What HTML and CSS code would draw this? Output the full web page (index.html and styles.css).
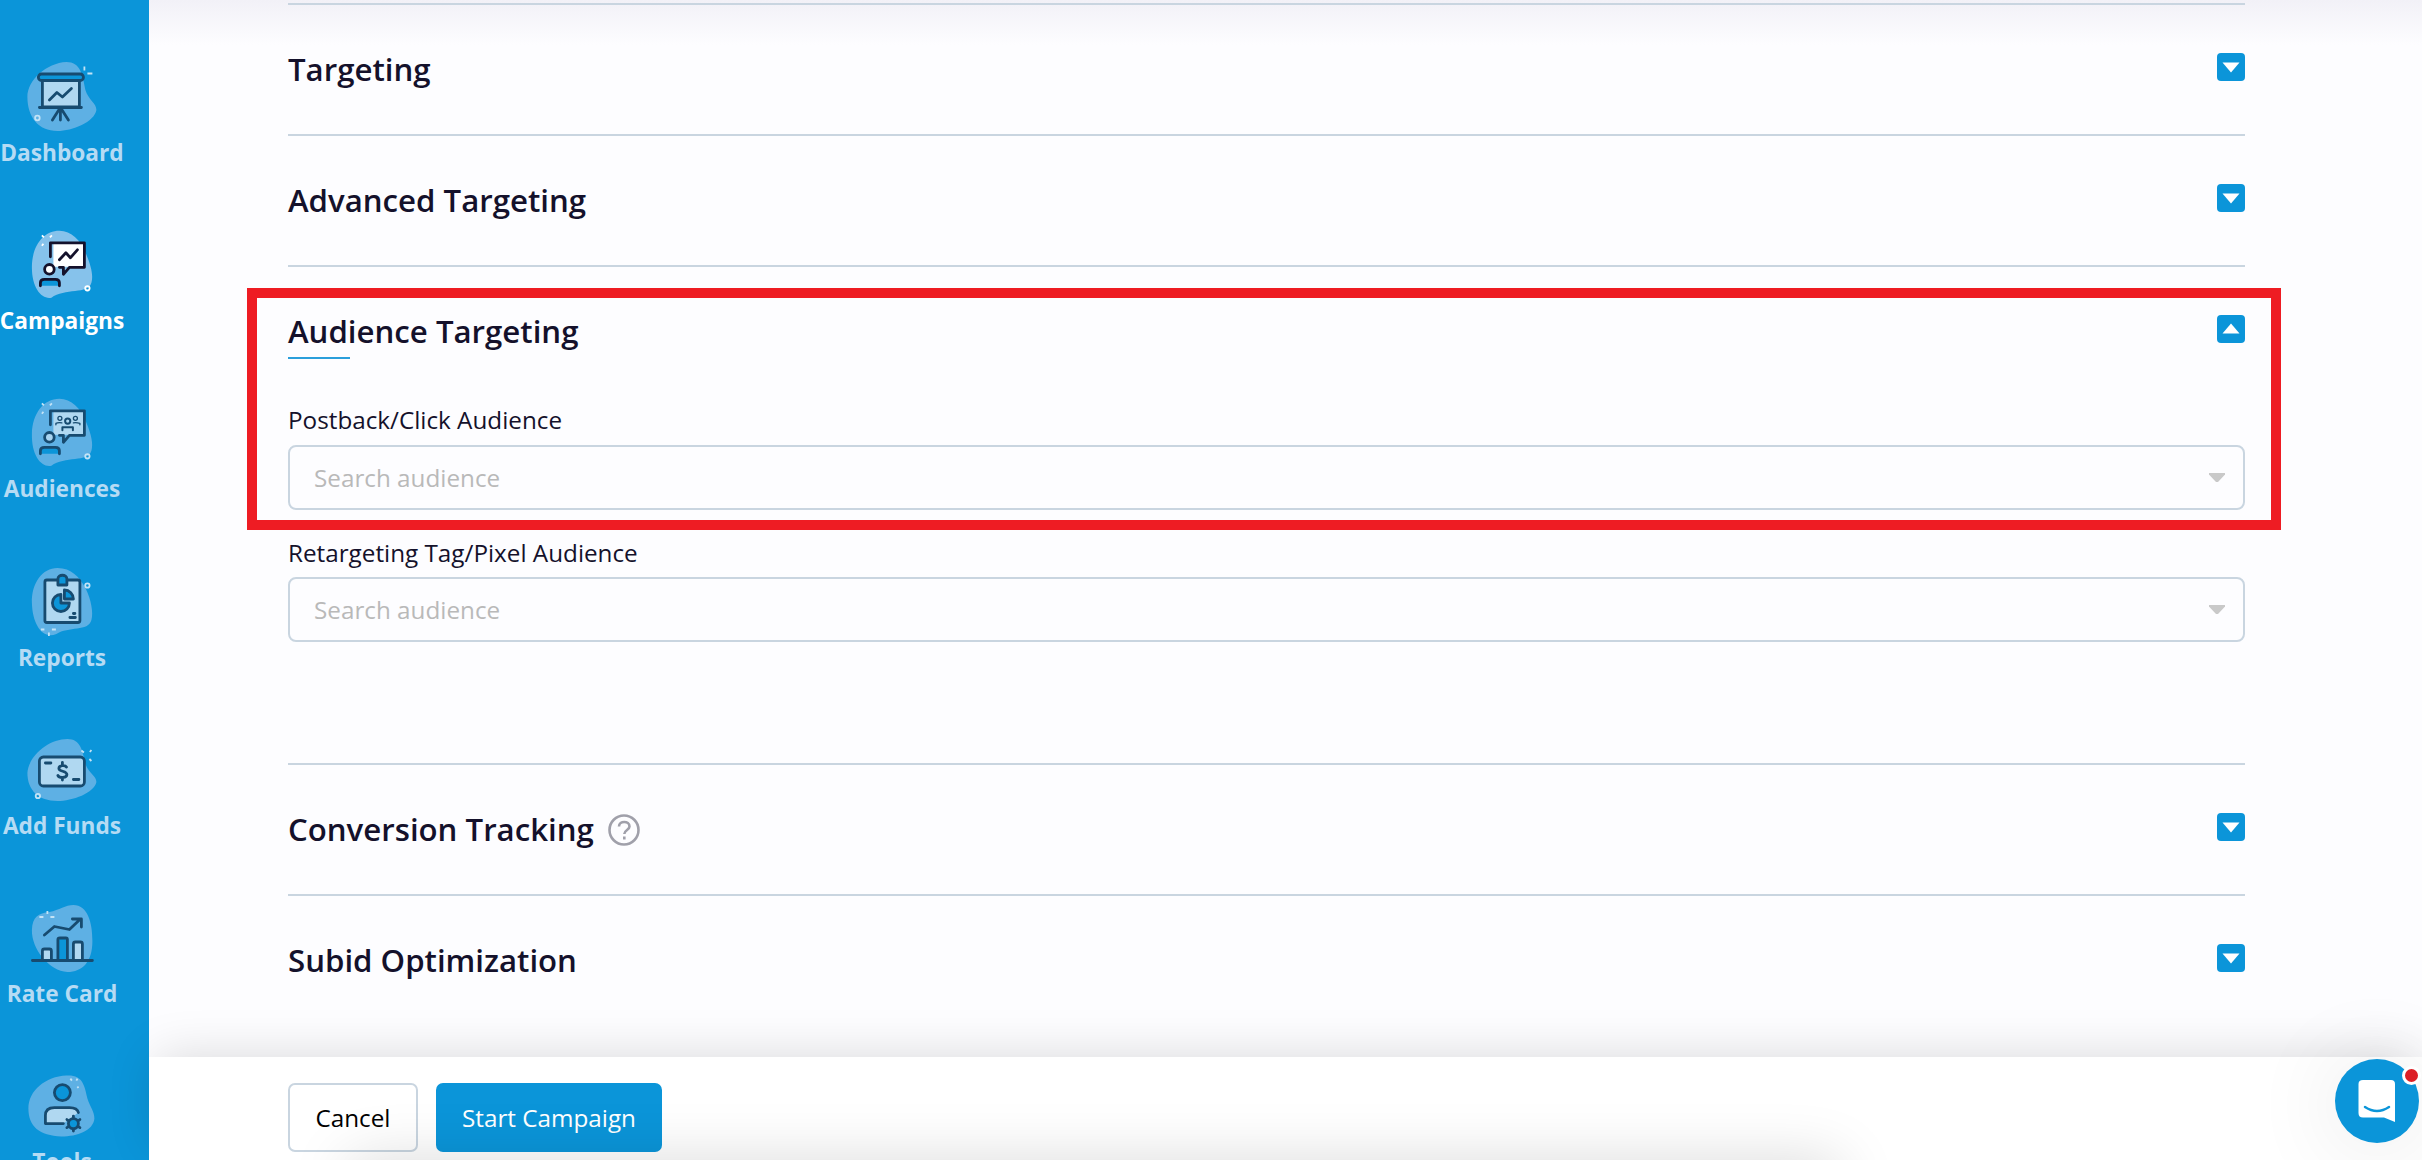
FILE: index.html
```html
<!DOCTYPE html>
<html lang="en">
<head>
<meta charset="utf-8">
<title>Create Campaign</title>
<link rel="stylesheet" href="styles.css">
</head>
<body>
<div class="app">
  <nav class="sidebar">
    <a class="nav-item">
      <svg class="nav-icon" viewBox="1.6 0 76 76">
        <path class="blob" d="M5 37C5 20 24 3 44 2C58 2 60 14 63 30C66 40 74 43 74 50C72 62 50 71 35 71C16 71 5 57 5 37Z"/>
        <g class="ink"><path class="paper" d="M20 20H57V47H20Z"/><rect class="blue" x="16" y="14" width="45" height="6.500" rx="3"/><path d="M17 47.500H59M38 48V60M37 49L30 60M39 49L46 60M27 40L34.500 32.500L40 37L49 28.500"/></g>
        <g class="spark"><circle cx="15" cy="58" r="2.300"/><path d="M62 6.500V10.500M65 13.500H70"/></g>
      </svg>
      <span class="nav-label">Dashboard</span>
    </a>
    <a class="nav-item active">
      <svg class="nav-icon" viewBox="1.6 -0.8 76 76">
        <path class="blob" d="M9.500 37C10 17 21 2 37 2C49 2 58 11 64 26C69 38 71 47 69 54C66 66 42 59 29 69C19 71 9 59 9.500 37Z"/>
        <g class="ink"><path class="paper" stroke="none" d="M31 15H61V38H31Z"/><path d="M28 28V14H62V38.500H47L41 45.500V38.500H37M37 31L43.500 24L48 29L55 21"/><circle class="light" cx="27" cy="40.500" r="4.800"/><path class="blue" d="M18 57V54Q18 50.500 22 50.500H33Q37 50.500 37 54V57"/></g>
        <g class="spark"><circle cx="65" cy="59.500" r="2.200"/><path d="M19.500 6.500L21.500 8.500M29.500 6.500L27.500 8.500M21 15L19.500 17"/></g>
      </svg>
      <span class="nav-label">Campaigns</span>
    </a>
    <a class="nav-item">
      <svg class="nav-icon" viewBox="1.6 -0.8 76 76">
        <path class="blob" d="M9.500 37C10 17 21 2 37 2C49 2 58 11 64 26C69 38 71 47 69 54C66 66 42 59 29 69C19 71 9 59 9.500 37Z"/>
        <g class="ink"><path class="paper" stroke="none" d="M31 15H61V38H31Z"/><path d="M28 28V14H62V38.500H47L41 45.500V38.500H37"/><circle class="light" cx="27" cy="40.500" r="4.800"/><path class="blue" d="M18 57V54Q18 50.500 22 50.500H33Q37 50.500 37 54V57"/><g class="thin"><circle cx="37.500" cy="21.500" r="2"/><circle cx="53" cy="21.500" r="2"/><circle class="bold" cx="45.300" cy="24.300" r="2.600"/><path d="M33.500 28V26.500Q35.500 25.500 39.500 26M57.500 28V26.500Q54 25.500 51 26"/><path class="bold" d="M40 33.500V30.500H50.500V33.500"/></g></g>
        <g class="spark"><circle cx="65" cy="59.500" r="2.200"/><path d="M19.500 6.500L21.500 8.500M29.500 6.500L27.500 8.500M21 15L19.500 17"/></g>
      </svg>
      <span class="nav-label">Audiences</span>
    </a>
    <a class="nav-item">
      <svg class="nav-icon" viewBox="1.6 -1 76 76">
        <path class="blob" d="M9.500 37C9 17 20 2 35 2C49 2 57 11 63 22C69 34 71 47 69 54C66 66 46 60 34 68C20 74 10 58 9.500 37Z"/>
        <g class="ink"><rect class="paper" x="22.500" y="14" width="35" height="42.500" rx="2"/><path class="blue" d="M35.500 19V13C35.500 8 44.500 8 44.500 13V19ZM38.500 28.500A8.500 8.500 0 1 0 47 37H38.500ZM42 24V33H51A9 9 0 0 0 42 24Z"/><path d="M51 47.500H52.500M47.500 51.500H53"/></g>
        <g class="spark"><circle cx="65" cy="19.500" r="2.200"/><path d="M18.500 63.500H22M29.500 63.500H33.500M26.500 66.500V70"/></g>
      </svg>
      <span class="nav-label">Reports</span>
    </a>
    <a class="nav-item">
      <svg class="nav-icon" viewBox="1.6 -1 76 76">
        <path class="blob" d="M5 39C6 22 26 5 45 5C58 5 60 16 63 30C67 40 74 42 74 48C72 59 50 67 35 67C16 67 5 56 5 39Z"/>
        <g class="ink"><rect class="paper" x="17" y="23" width="45" height="29" rx="4"/><path d="M23 29H28.500M51 45.500H56.500M44 33C43 31 36.500 31 36.500 34.500C36.500 38 44.500 36.500 44.500 40.500C44.500 44 37 44.500 35.500 41.500M40 28.500V31M40 43.500V46"/></g>
        <g class="spark"><circle cx="15.500" cy="62" r="2.200"/><path d="M59 16.500L61.500 18.500M69 16L67.500 18M67 25L69 27"/></g>
      </svg>
      <span class="nav-label">Add Funds</span>
    </a>
    <a class="nav-item">
      <svg class="nav-icon" viewBox="1.6 0 76 76">
        <path class="blob" d="M9.500 29C10 16 16 12 27 11C37 9 43 4 51 4C65 4 70 21 70 40C70 61 60 71 45 71C27 70 9 48 9.500 29Z"/>
        <g class="ink"><path class="paper" d="M20 58V50Q20 48 22 48H27Q29 48 29 50V58M51 58V43Q51 41 53 41H58Q60 41 60 43V58"/><path class="blue" d="M35.500 58V38.500Q35.500 37 37.500 37H43.500Q45 37 45 38.500V58"/><path d="M10 59.500H70M22 34L32 25.500L47 28.500L58 18M50 18H59V26"/></g>
        <g class="spark"><path d="M17 16H21M28 16H32M25 10V13"/></g>
      </svg>
      <span class="nav-label">Rate Card</span>
    </a>
    <a class="nav-item">
      <svg class="nav-icon" viewBox="0.6 -1.6 76 76">
        <path class="blob" d="M5 38C5 20 22 6 43 5C59 4 61 14 64 28C67 37 71 41 71 48C70 60 54 66 38 66C16 65 5 56 5 38Z"/>
        <g class="ink"><circle class="blue" cx="39" cy="22" r="8"/><path class="paper" d="M40 53H22V45Q22 37 31 37H46Q54 37 55 42"/><circle class="blue" cx="50" cy="53" r="5"/><path d="M50 45.500V47M50 59V60.500M43.500 49L45 50M55 56L56.500 57M43.500 57L45 56M55 50L56.500 49"/></g>
        <g class="spark"><path d="M47 8L48.500 10M54 8L53 10M54 16L55 17.500"/></g>
      </svg>
      <span class="nav-label">Tools</span>
    </a>
  </nav>
  <div class="page">
    <main class="content">
      <section class="section"><h2>Targeting</h2><button class="toggle"><svg viewBox="0 0 28 28"><path d="M5.500 9.500H22.500L14 19.500Z"/></svg></button></section>
      <section class="section"><h2>Advanced Targeting</h2><button class="toggle"><svg viewBox="0 0 28 28"><path d="M5.500 9.500H22.500L14 19.500Z"/></svg></button></section>
      <section class="section open">
        <header class="section-head"><h2>Audience Targeting</h2><button class="toggle"><svg viewBox="0 0 28 28"><path d="M5.500 18.500H22.500L14 8.500Z"/></svg></button></header>
        <label class="field-label">Postback/Click Audience</label>
        <div class="select"><span>Search audience</span><svg viewBox="0 0 16 10"><path d="M0 0H16V1.500L9 9H7L0 1.500Z"/></svg></div>
        <label class="field-label second">Retargeting Tag/Pixel Audience</label>
        <div class="select"><span>Search audience</span><svg viewBox="0 0 16 10"><path d="M0 0H16V1.500L9 9H7L0 1.500Z"/></svg></div>
        <div class="highlight"></div>
      </section>
      <section class="section"><h2>Conversion Tracking</h2><span class="help"><svg viewBox="0 0 32 32"><circle cx="16" cy="16" r="14.500"/><path d="M11 12.500C11 6.500 21.500 6.500 21.500 12.500C21.500 16 16.300 16 16.300 20"/><path d="M16.300 22.500V25.500"/></svg></span><button class="toggle"><svg viewBox="0 0 28 28"><path d="M5.500 9.500H22.500L14 19.500Z"/></svg></button></section>
      <section class="section"><h2>Subid Optimization</h2><button class="toggle"><svg viewBox="0 0 28 28"><path d="M5.500 9.500H22.500L14 19.500Z"/></svg></button></section>
    </main>
    <footer class="actions"><button class="btn">Cancel</button><button class="btn primary">Start Campaign</button></footer>
  </div>
  <button class="chat"><svg viewBox="0 0 84 84"><path class="bubble" d="M28 21H56Q60 21 60 25V63L49 58.500H28Q23.500 58.500 23.500 54V25Q23.500 21 28 21Z"/><path class="smile" d="M30 48Q42 56 54 48"/></svg><span class="badge"></span></button>
</div>
</body>
</html>
```
FILE: styles.css
```css
* { box-sizing: border-box; }
body { margin: 0; font-family: "Open Sans", sans-serif; color: #14112b; background: #fdfdff; overflow: hidden; }
button { font: inherit; border: 0; padding: 0; }
h2 { margin: -1px 0 0; font-size: 31.2px; font-weight: 600; line-height: 44px; white-space: nowrap; }
.app { position: relative; display: flex; height: 1160px; overflow: hidden; }

.sidebar { flex: 0 0 149px; padding-top: 60px; background: #0b95d9; }
.nav-item { display: flex; flex-direction: column; align-items: center; width: 124px; height: 168.2px; color: #b5dbf4; }
.nav-icon { flex: none; width: 76px; height: 76px; }
.nav-label { font-size: 22.7px; font-weight: 700; line-height: 33px; white-space: nowrap; }
.active { color: #fff; }
.blob { fill: #5eb0e4; }
.active .blob { fill: #86c2eb; }
.ink { fill: none; stroke: #174b70; stroke-width: 2.8; stroke-linecap: round; stroke-linejoin: round; }
.active .ink { stroke: #14112b; }
.paper { fill: #b0d8f1; }
.active .paper { fill: #fff; }
.blue { fill: #0b95d9; }
.light { fill: #a9d4f0; }
.active .light { fill: #fff; }
.thin { stroke-width: 1.3; }
.bold { stroke-width: 2; }
.spark { fill: none; stroke: #c3e3f6; stroke-width: 1.8; }
.active .spark { stroke: #fff; }

.page { flex: 1; display: flex; flex-direction: column; min-width: 0; background: linear-gradient(#f2f1f7 0, #fdfdff 45px); }
.content { flex: 0 0 1057px; padding: 3px 177px 0 139px; }
.section { display: flex; height: 131px; padding: 43px 0 0; border-top: 2px solid #c9d5e0; }
.toggle { display: flex; flex: 0 0 28px; height: 28px; margin: 5px 0 0 auto; border-radius: 4px; background: #0b95d9; }
.toggle svg { width: 28px; height: 28px; fill: #fff; }
.open { position: relative; display: block; height: 498px; }
.section-head { display: flex; height: 49px; }
.section-head::before { content: ""; position: absolute; left: 0; top: 90px; width: 62px; height: 2px; background: #2a9fdb; }
.field-label { display: block; margin-top: 44px; font-size: 24.25px; line-height: 34px; }
.second { margin-top: 26px; }
.select { display: flex; align-items: center; justify-content: space-between; height: 65px; margin-top: 8px; padding: 0 18px 0 24px; border: 2px solid #c9d5e0; border-radius: 8px; color: #b9b9b9; font-size: 24.25px; }
.select + .second + .select { margin-top: 7px; }
.select svg { width: 16px; height: 10px; fill: #c9c9c9; }
.highlight { position: absolute; left: -41px; top: 21px; width: 2034px; height: 242px; border: 10px solid #ee1c23; }
.help { margin: 6px 0 0 14px; width: 32px; height: 32px; }
.help svg { display: block; fill: none; stroke: #a0a0aa; stroke-width: 2.6; }

.actions { position: relative; display: flex; flex: 1; gap: 18px; padding: 26px 0 0 139px; background: #fff; box-shadow: 0 -8px 50px -8px rgba(0,0,0,.15); }
/* soft shade rising from the bottom edge of the window */
.actions::after { content: ""; position: absolute; left: 200px; top: 103px; width: 1490px; height: 60px; box-shadow: 0 0 60px rgba(0,0,0,.15); }
.btn { width: 130px; height: 69px; border: 2px solid #c9d5e0; border-radius: 7px; background: #fff; color: #000; font-size: 24.25px; }
.primary { width: 226px; border: 0; background: #0b95d9; color: #fff; }
.chat { position: absolute; left: 2335px; top: 1059px; width: 84px; height: 84px; border-radius: 50%; background: #0b95d9; box-shadow: 0 4px 90px 4px rgba(0,0,0,.09); }
.chat svg { display: block; }
.bubble { fill: #fff; }
.smile { fill: none; stroke: #0b95d9; stroke-width: 2.5; stroke-linecap: round; }
.badge { position: absolute; right: -2px; top: 7px; width: 19px; height: 19px; border: 3px solid #fff; border-radius: 50%; background: #dc1f26; }
```
